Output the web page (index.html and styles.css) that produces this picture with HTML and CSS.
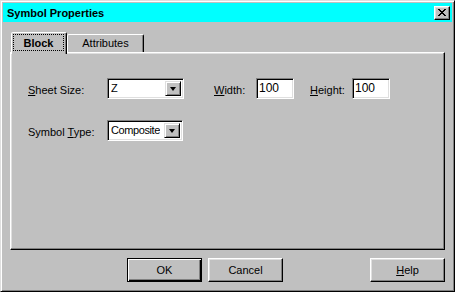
FILE: index.html
```html
<!DOCTYPE html>
<html>
<head>
<meta charset="utf-8">
<link rel="stylesheet" href="styles.css">
</head>
<body>
<div class="window">
  <div class="titlebar">
    <span class="title">Symbol Properties</span>
    <span class="close"><svg width="8" height="7" viewBox="0 0 8 7"><path d="M0 0h2v1h1v1h2v-1h1v-1h2v1h-1v1h-1v1h-1v1h1v1h1v1h1v1h-2v-1h-1v-1h-2v1h-1v1h-2v-1h1v-1h1v-1h1v-1h-1v-1h-1v-1h-1z" fill="#000"/></svg></span>
  </div>
  <div class="body">
    <div class="tabs">
      <div class="tab active"><span class="focus">Block</span></div>
      <div class="tab">Attributes</div>
    </div>
    <div class="panel">
      <div class="row">
        <span class="label lbl1"><u>S</u>heet Size:</span>
        <div class="combo c1"><span class="val">Z</span><span class="drop"><i class="arrow"></i></span></div>
        <span class="label lbl2"><u>W</u>idth:</span>
        <div class="field">100</div>
        <span class="label lbl3"><u>H</u>eight:</span>
        <div class="field">100</div>
      </div>
      <div class="row">
        <span class="label lbl1">Symbol <u>T</u>ype:</span>
        <div class="combo c2"><span class="val tight">Composite</span><span class="drop"><i class="arrow"></i></span></div>
      </div>
    </div>
    <div class="buttons">
      <div class="btn default"><span>OK</span></div>
      <div class="btn"><span>Cancel</span></div>
      <div class="btn help"><span><u>H</u>elp</span></div>
    </div>
  </div>
</div>
</body>
</html>
```
FILE: styles.css
```css
html, body {
  margin: 0;
  padding: 0;
  background: #c0c0c0;
}
.window {
  width: 455px;
  height: 292px;
  box-sizing: border-box;
  border: 1px solid;
  border-color: #dfdfdf #000 #000 #dfdfdf;
  box-shadow: inset 1px 1px #fff, inset -1px -1px #808080;
  padding: 2px;
  background: #c0c0c0;
  font-family: "Liberation Sans", Arial, sans-serif;
  font-size: 11px;
  color: #000;
}
.titlebar {
  height: 19px;
  background: #00ffff;
  display: flex;
  align-items: center;
  justify-content: space-between;
  padding-left: 4px;
}
.title {
  font-weight: bold;
  font-size: 11px;
}
.close {
  width: 16px;
  height: 14px;
  box-sizing: border-box;
  margin-right: 2px;
  background: #c0c0c0;
  border: 1px solid;
  border-color: #fff #000 #000 #fff;
  box-shadow: inset -1px -1px #808080, inset 1px 1px #dfdfdf;
  display: flex;
  align-items: center;
  justify-content: center;
}
.close svg { display: block; }
.body {
  padding-top: 10px;
}
.tabs {
  display: flex;
  align-items: flex-end;
  padding-left: 8px;
  height: 20px;
}
.tab {
  position: relative;
  box-sizing: border-box;
  height: 18px;
  border: 1px solid;
  border-bottom: none;
  border-color: #fff #000 transparent #fff;
  border-radius: 2px 2px 0 0;
  box-shadow: inset -1px 0 #808080;
  display: flex;
  align-items: center;
  justify-content: center;
  background: #c0c0c0;
  width: 77px;
  padding-bottom: 1px;
  font-weight: normal;
}
.tab.active {
  height: 22px;
  width: 56px;
  margin-bottom: -2px;
  z-index: 1;
  font-weight: bold;
  padding: 1px 2px 3px 1px;
}
.focus {
  display: flex;
  align-items: center;
  justify-content: center;
  width: 100%;
  height: 100%;
  box-sizing: border-box;
  border: 1px dotted #000;
}
.panel {
  margin-left: 7px;
  width: 435px;
  height: 198px;
  box-sizing: border-box;
  border: 1px solid;
  border-color: #fff #000 #000 #fff;
  box-shadow: inset -1px -1px #808080, inset 1px 1px #dfdfdf;
  padding: 25px 0 0 17px;
  display: flex;
  flex-direction: column;
  gap: 21px;
}
.row {
  display: flex;
  align-items: center;
  height: 21px;
}
.label { display: inline-block; padding-top: 2px; }
.lbl1 { width: 79px; }
.lbl2 { width: 42px; margin-left: 30px; }
.lbl3 { width: 42px; margin-left: 16px; }
.field, .combo {
  box-sizing: border-box;
  height: 21px;
  background: #fff;
  border: 1px solid;
  border-color: #808080 #fff #fff #808080;
  box-shadow: inset 1px 1px #000, inset -1px -1px #dfdfdf;
  padding: 2px 2px 0 2px;
  font-size: 12px;
}
.field { width: 38px; }
.combo {
  display: flex;
  justify-content: space-between;
  padding: 2px 2px 2px 3px;
  font-size: 11px;
}
.c1 { width: 77px; }
.c2 { width: 76px; }
.val { line-height: 15px; white-space: nowrap; overflow: hidden; }
.tight { letter-spacing: -0.4px; }
.drop {
  flex-shrink: 0;
  width: 16px;
  height: 15px;
  box-sizing: border-box;
  background: #c0c0c0;
  border: 1px solid;
  border-color: #dfdfdf #000 #000 #dfdfdf;
  box-shadow: inset 1px 1px #fff, inset -1px -1px #808080;
  display: flex;
  align-items: center;
  justify-content: center;
}
.arrow {
  width: 0;
  height: 0;
  border-left: 3.5px solid transparent;
  border-right: 3.5px solid transparent;
  border-top: 4px solid #000;
}
.buttons {
  display: flex;
  margin-top: 8px;
}
.btn {
  width: 75px;
  height: 24px;
  box-sizing: border-box;
  border: 1px solid;
  border-color: #fff #000 #000 #fff;
  box-shadow: inset -1px -1px #808080, inset 1px 1px #dfdfdf;
  display: flex;
  align-items: center;
  justify-content: center;
  margin-left: 6px;
  font-size: 11px;
}
.btn.default {
  margin-left: 124px;
  border: 1px solid #000;
  box-shadow: inset 1px 1px #fff, inset -1px -1px #000, inset -2px -2px #808080;
}
.btn.help {
  margin-left: auto;
  margin-right: 7px;
}
```
